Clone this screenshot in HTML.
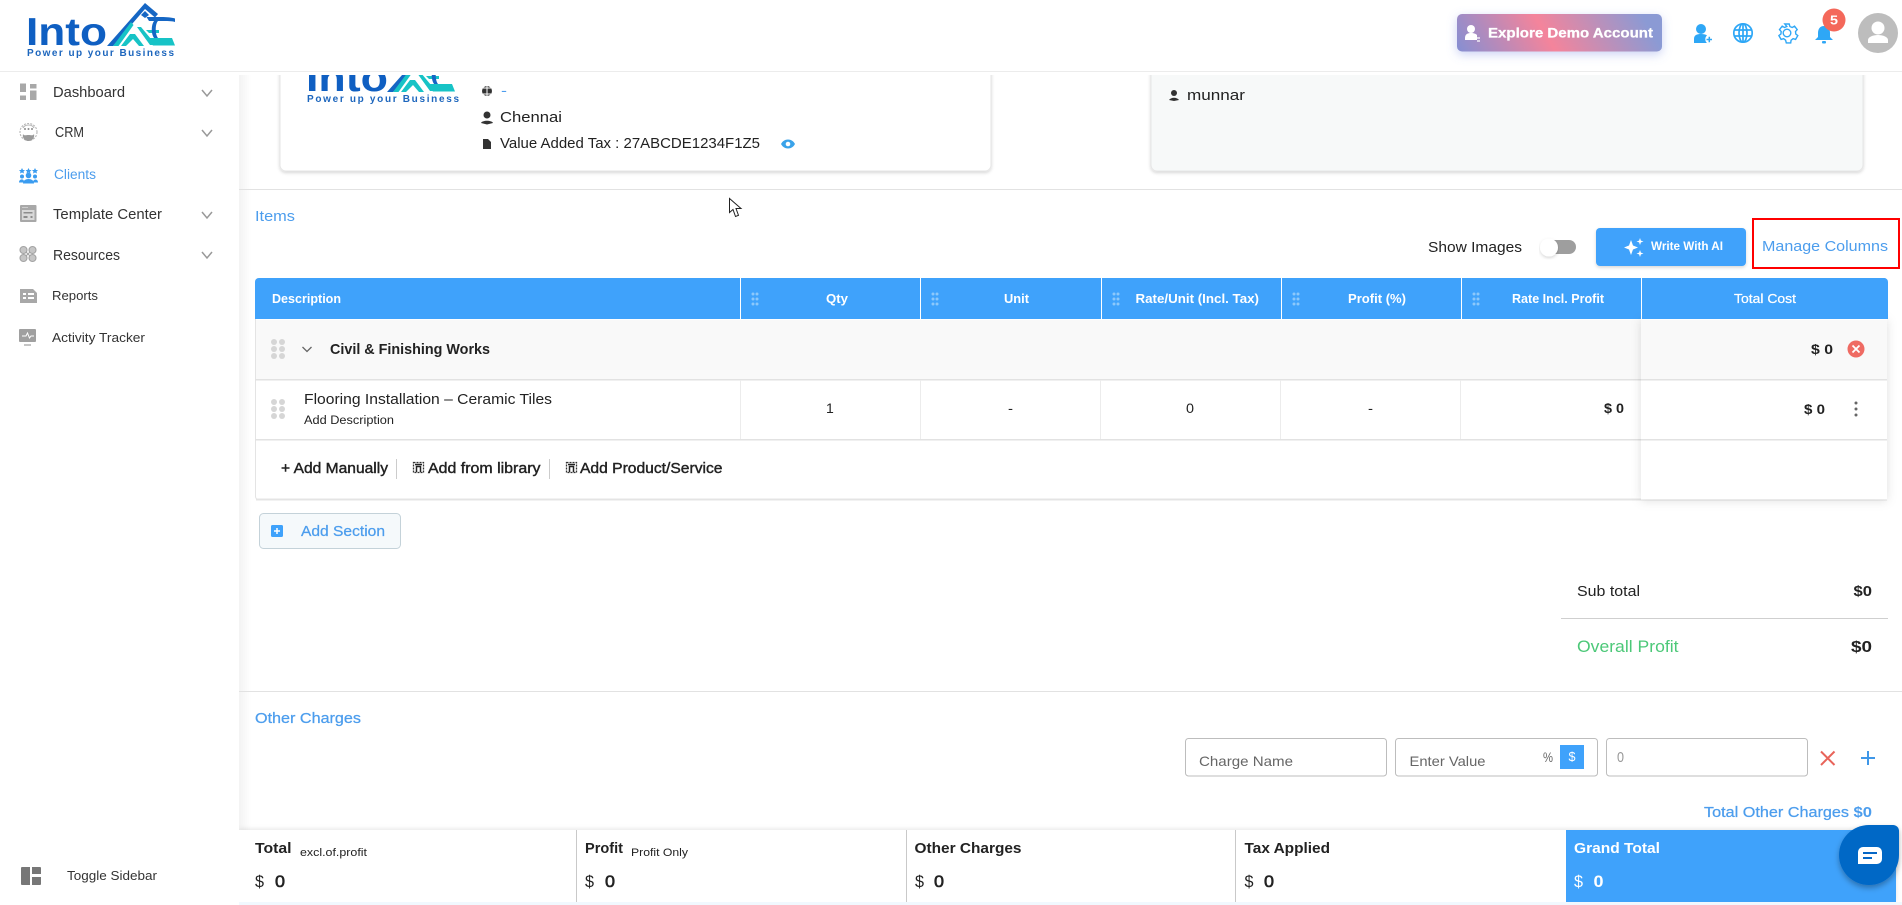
<!DOCTYPE html>
<html lang="en"><head><meta charset="utf-8"><title>Estimate Items</title>
<style>
html,body{margin:0;padding:0;background:#fff;width:1902px;height:905px;overflow:hidden}
svg{display:block;position:absolute;left:0;top:0}
text{font-family:"Liberation Sans",Arial,sans-serif;fill:#222;white-space:pre}
.b{font-weight:700}
.m{stroke:#222;stroke-width:.4px}
.bl{fill:#4c9ded}
.blm{fill:#4c9ded;stroke:#4c9ded;stroke-width:.25px}
.w{fill:#fff}
.wb{fill:#fff;font-weight:700}
.sb{fill:#333}
</style></head><body>
<svg width="1902" height="905" viewBox="0 0 1902 905" xmlns="http://www.w3.org/2000/svg">
<defs>
<filter id="sh" x="-5%" y="-10%" width="110%" height="125%"><feDropShadow dx="0" dy="1.5" stdDeviation="1.500" flood-color="#000" flood-opacity=".16"/></filter>
<filter id="sh2" x="-15%" y="-5%" width="125%" height="112%"><feDropShadow dx="0" dy="1" stdDeviation="5" flood-color="#000" flood-opacity=".13"/></filter>
<filter id="sh3" x="-20%" y="-50%" width="140%" height="220%"><feDropShadow dx="0" dy="3" stdDeviation="5" flood-color="#6b7fe0" flood-opacity=".35"/></filter>
<filter id="sh4" x="-30%" y="-30%" width="160%" height="170%"><feDropShadow dx="0" dy="3" stdDeviation="3" flood-color="#000" flood-opacity=".3"/></filter>
<filter id="sh5" x="-5%" y="-30%" width="110%" height="160%"><feDropShadow dx="0" dy="-1" stdDeviation="2.500" flood-color="#000" flood-opacity=".1"/></filter>
<linearGradient id="lg" x1="0" x2="1"><stop offset="0" stop-color="#f3f3f3"/><stop offset="1" stop-color="#fff"/></linearGradient>
<linearGradient id="demo" gradientUnits="userSpaceOnUse" x1="1465" y1="80" x2="1625" y2="-14"><stop offset="0" stop-color="#7b90d8"/><stop offset=".5" stop-color="#f4849b"/><stop offset="1" stop-color="#8b9ad4"/></linearGradient>
<g id="hd"><g fill="#8cc8fb"><circle cx="-2" cy="-5" r="1.500"/><circle cx="2" cy="-5" r="1.500"/><circle cx="-2" cy="0" r="1.500"/><circle cx="2" cy="0" r="1.500"/><circle cx="-2" cy="5" r="1.500"/><circle cx="2" cy="5" r="1.500"/></g></g>
<g id="rd"><g fill="#d6d6d6"><circle cx="-4" cy="-7" r="3"/><circle cx="4" cy="-7" r="3"/><circle cx="-4" cy="0" r="3"/><circle cx="4" cy="0" r="3"/><circle cx="-4" cy="7" r="3"/><circle cx="4" cy="7" r="3"/></g></g>
<g id="lib"><rect x=".5" y=".5" width="10" height="10" fill="none" stroke="#333" stroke-width="1.300" stroke-dasharray="2 1"/><path d="M3.500 10V4.500h4V10M2 2.500h7" fill="none" stroke="#222" stroke-width="1.500"/></g>
<g id="mark">
<path d="M107 46L145 3l13 11-3 3.500-10-8.500L113 46z" fill="#1566c4"/>
<path d="M141 15l4-4 4 4-4 3z" fill="#1566c4"/>
<path d="M113 46L131 22l2.500 3L118.500 46z" fill="#17c3c6"/>
<path d="M121 46l9-12 5 0 9 12h-5l-6-7-7 7z" fill="#17c3c6"/>
<path d="M137 27h4l15 18h-6z" fill="#17c3c6"/>
<path d="M145 38h27l3 7.500h-22z" fill="#17c3c6"/>
<path d="M146 30h13v3h-10z" fill="#17c3c6"/>
<path d="M149 21h12c6 0 11 0 14 1v-3.500c-3-1-8-1.500-14-1.500h-14.500z" fill="#1566c4"/>
<path d="M158 21c-3 3-3 13 0 17h-4c-3-4-3-13 0-17z" fill="#1566c4"/>
</g>
</defs>

<!-- content background -->
<rect x="239" y="0" width="12" height="905" fill="url(#lg)"/>

<!-- top cards -->
<rect x="280" y="40" width="711" height="131" rx="6" fill="#fff" stroke="#e6e6e6" filter="url(#sh)"/>
<rect x="1151" y="40" width="712" height="131" rx="6" fill="#f7f9f9" stroke="#e6e6e6" filter="url(#sh)"/>
<text x="306" y="91" class="b" font-size="39" style="fill:#0f5fc2" textLength="82" lengthAdjust="spacingAndGlyphs">Into</text>
<use href="#mark" transform="translate(280 46)"/>
<text x="307" y="102" class="b" font-size="10" style="fill:#1d66bd" textLength="152">Power up your Business</text>
<g fill="#333">
<circle cx="487" cy="91" r="5"/><path d="M483 88h8M483 94h8M487 86v10" stroke="#fff" stroke-width="1" fill="none"/>
<circle cx="487" cy="115" r="3.500"/><path d="M481 123c1-3 11-3 12 0l-6 1.500z"/>
<path d="M483 139h5l3 3v7h-8z"/>
</g>
<text x="501" y="95" class="bl" font-size="14" textLength="6" lengthAdjust="spacingAndGlyphs">-</text>
<text x="500" y="122" font-size="15" textLength="62" lengthAdjust="spacingAndGlyphs">Chennai</text>
<text x="500" y="148" font-size="15" textLength="260" lengthAdjust="spacingAndGlyphs">Value Added Tax : 27ABCDE1234F1Z5</text>
<path d="M781 144c3-6 11-6 14 0-3 6-11 6-14 0z" fill="#3aa3ea"/><circle cx="788" cy="144" r="2.300" fill="#fff"/>
<circle cx="1174" cy="93" r="3" fill="#333"/><path d="M1169 100c2-3 8-3 10 0l-5 1z" fill="#333"/>
<text x="1187" y="100" font-size="15" textLength="58" lengthAdjust="spacingAndGlyphs">munnar</text>

<!-- section divider -->
<rect x="239" y="189" width="1663" height="1" fill="#e2e2e2"/>
<text x="255" y="221" class="bl" font-size="15" textLength="40" lengthAdjust="spacingAndGlyphs">Items</text>

<!-- cursor -->
<path d="M729.500 198.500v14l3.500-3 2.500 7 3-1.200-2.500-6.800h5z" fill="#fff" stroke="#222" stroke-width="1"/>

<!-- toolbar -->
<text x="1428" y="252" font-size="15" textLength="94" lengthAdjust="spacingAndGlyphs">Show Images</text>
<rect x="1548" y="240" width="28" height="14" rx="7" fill="#9e9e9e"/>
<circle cx="1549" cy="247.500" r="9" fill="#fff" filter="url(#sh)"/>
<rect x="1596" y="228" width="150" height="38" rx="4" fill="#3fa2fb" filter="url(#sh)"/>
<path d="M1631 240l2 5.500 5 2-5 2-2 5.500-2-5.500-5-2 5-2zM1640 238l.9 2.600 2.600.9-2.600.9-.9 2.600-.9-2.600-2.600-.9 2.600-.9zM1640 250l.9 2.600 2.600.9-2.600.9-.9 2.600-.9-2.600-2.600-.9 2.600-.9z" fill="#fff"/>
<text x="1651" y="250" class="wb" font-size="11.500" textLength="72" lengthAdjust="spacingAndGlyphs">Write With AI</text>
<rect x="1753" y="219" width="146" height="49" fill="none" stroke="#f00" stroke-width="2"/>
<text x="1762" y="251" class="bl" font-size="15" textLength="126" lengthAdjust="spacingAndGlyphs">Manage Columns</text>

<!-- table -->
<rect x="255.500" y="278.500" width="1631" height="221" rx="3" fill="#fff" stroke="#e4e4e4"/>
<rect x="256" y="498.500" width="1631" height="2" fill="#e4e4e4"/>
<path d="M255 319v-37a4 4 0 0 1 4-4h1625a4 4 0 0 1 4 4v37z" fill="#3fa2fb"/>
<rect x="256" y="320" width="1630" height="59" fill="#f9f9f9"/>
<rect x="255" y="379" width="1632" height="1.500" fill="#e2e2e2"/>
<rect x="255" y="439" width="1632" height="1.500" fill="#e2e2e2"/>
<g fill="#fff"><rect x="740" y="278" width="1" height="41"/><rect x="920" y="278" width="1" height="41"/><rect x="1101" y="278" width="1" height="41"/><rect x="1281" y="278" width="1" height="41"/><rect x="1461" y="278" width="1" height="41"/><rect x="1641" y="278" width="1" height="41"/></g>
<g fill="#ececec"><rect x="740" y="380" width="1" height="59"/><rect x="920" y="380" width="1" height="59"/><rect x="1100" y="380" width="1" height="59"/><rect x="1280" y="380" width="1" height="59"/><rect x="1460" y="380" width="1" height="59"/></g>

<!-- sticky total column -->
<g filter="url(#sh2)"><rect x="1641" y="319" width="246" height="180.500" fill="#fff"/></g>
<path d="M1642 319v-41h242a3 3 0 0 1 3 3v38z" fill="#3fa2fb"/>
<rect x="1641" y="320" width="246" height="59" fill="#f9f9f9"/>
<rect x="1641" y="379" width="246" height="1.500" fill="#e2e2e2"/>
<rect x="1641" y="439" width="246" height="1.500" fill="#e2e2e2"/>

<use href="#hd" x="755" y="299"/><use href="#hd" x="935" y="299"/><use href="#hd" x="1116" y="299"/><use href="#hd" x="1296" y="299"/><use href="#hd" x="1476" y="299"/>
<text x="272" y="303" class="wb" font-size="13" textLength="69" lengthAdjust="spacingAndGlyphs">Description</text>
<text x="826" y="303" class="wb" font-size="13" textLength="22" lengthAdjust="spacingAndGlyphs">Qty</text>
<text x="1004" y="303" class="wb" font-size="13" textLength="25" lengthAdjust="spacingAndGlyphs">Unit</text>
<text x="1135.500" y="303" class="wb" font-size="13" textLength="123.500" lengthAdjust="spacingAndGlyphs">Rate/Unit (Incl. Tax)</text>
<text x="1348" y="303" class="wb" font-size="13" textLength="58" lengthAdjust="spacingAndGlyphs">Profit (%)</text>
<text x="1512" y="303" class="wb" font-size="13" textLength="92" lengthAdjust="spacingAndGlyphs">Rate Incl. Profit</text>
<text x="1734" y="303" class="w" font-size="13" textLength="62" lengthAdjust="spacingAndGlyphs" style="stroke:#fff;stroke-width:.25px">Total Cost</text>

<use href="#rd" x="278" y="349"/>
<path d="M302.500 347l4.500 4.500 4.500-4.500" fill="none" stroke="#666" stroke-width="1.300"/>
<text x="330" y="354" class="b" font-size="15" textLength="160" lengthAdjust="spacingAndGlyphs">Civil &amp; Finishing Works</text>
<text x="1811" y="354" class="b" font-size="14" textLength="22" lengthAdjust="spacingAndGlyphs">$ 0</text>
<circle cx="1856" cy="349" r="8.500" fill="#ef6b63"/><path d="M1852.500 345.500l7 7m0-7l-7 7" stroke="#fff" stroke-width="1.800"/>

<use href="#rd" x="278" y="409"/>
<text x="304" y="404" font-size="14.500" textLength="248" lengthAdjust="spacingAndGlyphs">Flooring Installation – Ceramic Tiles</text>
<text x="304" y="424" font-size="11.500" textLength="90" lengthAdjust="spacingAndGlyphs">Add Description</text>
<text x="826" y="413" font-size="14">1</text>
<text x="1008" y="413" font-size="14" textLength="5" lengthAdjust="spacingAndGlyphs">-</text>
<text x="1186" y="413" font-size="14" textLength="8" lengthAdjust="spacingAndGlyphs">0</text>
<text x="1368" y="413" font-size="14" textLength="5" lengthAdjust="spacingAndGlyphs">-</text>
<text x="1604" y="413" class="b" font-size="14" textLength="20" lengthAdjust="spacingAndGlyphs">$ 0</text>
<text x="1804" y="414" class="b" font-size="14" textLength="21" lengthAdjust="spacingAndGlyphs">$ 0</text>
<g fill="#666"><circle cx="1856" cy="403" r="1.500"/><circle cx="1856" cy="409" r="1.500"/><circle cx="1856" cy="415" r="1.500"/></g>

<text x="281" y="473" class="m" font-size="14.500" textLength="107" lengthAdjust="spacingAndGlyphs">+ Add Manually</text>
<rect x="396" y="459" width="1" height="20" fill="#ccc"/>
<use href="#lib" x="413" y="462"/>
<text x="428" y="473" class="m" font-size="14.500" textLength="112.500" lengthAdjust="spacingAndGlyphs">Add from library</text>
<rect x="549" y="459" width="1" height="20" fill="#ccc"/>
<use href="#lib" x="566" y="462"/>
<text x="580" y="473" class="m" font-size="14.500" textLength="142.500" lengthAdjust="spacingAndGlyphs">Add Product/Service</text>

<rect x="259.500" y="513.500" width="141" height="35" rx="4" fill="#f5f9fb" stroke="#c4d2d9"/>
<rect x="271" y="525" width="12" height="12" rx="1.500" fill="#3fa2fb"/><path d="M277 528v6m-3-3h6" stroke="#fff" stroke-width="1.500"/>
<text x="301" y="536" class="blm" font-size="14.500" textLength="84" lengthAdjust="spacingAndGlyphs">Add Section</text>

<!-- totals -->
<text x="1577" y="596" font-size="14.500" textLength="63" lengthAdjust="spacingAndGlyphs">Sub total</text>
<text x="1853.500" y="596" class="b" font-size="14.500" textLength="18.500" lengthAdjust="spacingAndGlyphs">$0</text>
<rect x="1561" y="618" width="327" height="1" fill="#cfcfcf"/>
<text x="1577" y="652" font-size="16.500" style="fill:#4cc878" textLength="101.500" lengthAdjust="spacingAndGlyphs">Overall Profit</text>
<text x="1851" y="652" class="b" font-size="16" textLength="21" lengthAdjust="spacingAndGlyphs">$0</text>
<rect x="239" y="691" width="1663" height="1" fill="#e2e2e2"/>

<!-- other charges -->
<text x="255" y="723" class="blm" font-size="14.500" textLength="106" lengthAdjust="spacingAndGlyphs">Other Charges</text>
<rect x="1185.500" y="738.500" width="201" height="37.500" rx="3" fill="#fff" stroke="#bdbdbd"/>
<text x="1199" y="766" font-size="14" style="fill:#666" textLength="94" lengthAdjust="spacingAndGlyphs">Charge Name</text>
<rect x="1395.500" y="738.500" width="202" height="37.500" rx="3" fill="#fff" stroke="#bdbdbd"/>
<text x="1409.500" y="766" font-size="14" style="fill:#666" textLength="76" lengthAdjust="spacingAndGlyphs">Enter Value</text>
<text x="1543" y="762" font-size="14" style="fill:#666" textLength="10" lengthAdjust="spacingAndGlyphs">%</text>
<rect x="1560" y="745" width="24" height="24" fill="#3fa2fb"/>
<text x="1568.500" y="761" class="w" font-size="12.500" textLength="7" lengthAdjust="spacingAndGlyphs">$</text>
<rect x="1606.500" y="738.500" width="201" height="37.500" rx="3" fill="#fff" stroke="#bdbdbd"/>
<text x="1617" y="762" font-size="15" style="fill:#999" textLength="7" lengthAdjust="spacingAndGlyphs">0</text>
<path d="M1821 751.500l13.500 13.500m0-13.500l-13.500 13.500" stroke="#e8645a" stroke-width="2" fill="none"/>
<path d="M1868 751v14m-7-7h14" stroke="#3f97e8" stroke-width="2" fill="none"/>
<text x="1704" y="817" class="blm" font-size="14.500" textLength="145" lengthAdjust="spacingAndGlyphs">Total Other Charges</text>
<text x="1853.500" y="817" class="b" font-size="14.500" style="fill:#4c9ded" textLength="18.500" lengthAdjust="spacingAndGlyphs">$0</text>

<!-- bottom summary -->
<rect x="239" y="830" width="1657" height="72" fill="#fff" filter="url(#sh5)"/>
<rect x="239" y="902" width="1663" height="3" fill="#f1f8fe"/>
<rect x="576" y="830" width="1" height="72" fill="#c9c9c9"/>
<rect x="906" y="830" width="1" height="72" fill="#c9c9c9"/>
<rect x="1235" y="830" width="1" height="72" fill="#c9c9c9"/>
<rect x="1566" y="830" width="330" height="72" fill="#3fa2fb"/>
<text x="255" y="853" class="b" font-size="14.500" textLength="36.500" lengthAdjust="spacingAndGlyphs">Total</text>
<text x="300" y="856" font-size="11" textLength="67" lengthAdjust="spacingAndGlyphs">excl.of.profit</text>
<text x="255" y="887" font-size="17" textLength="9" lengthAdjust="spacingAndGlyphs">$</text>
<text x="275" y="887" class="m" font-size="17" textLength="10" lengthAdjust="spacingAndGlyphs" style="stroke-width:.6px">0</text>
<text x="585" y="853" class="b" font-size="14.500" textLength="38" lengthAdjust="spacingAndGlyphs">Profit</text>
<text x="631" y="856" font-size="11" textLength="57" lengthAdjust="spacingAndGlyphs">Profit Only</text>
<text x="585" y="887" font-size="17" textLength="9" lengthAdjust="spacingAndGlyphs">$</text>
<text x="605" y="887" class="m" font-size="17" textLength="10" lengthAdjust="spacingAndGlyphs" style="stroke-width:.6px">0</text>
<text x="914.500" y="853" class="b" font-size="14.500" textLength="107" lengthAdjust="spacingAndGlyphs">Other Charges</text>
<text x="915" y="887" font-size="17" textLength="9" lengthAdjust="spacingAndGlyphs">$</text>
<text x="934" y="887" class="m" font-size="17" textLength="10" lengthAdjust="spacingAndGlyphs" style="stroke-width:.6px">0</text>
<text x="1244.500" y="853" class="b" font-size="14.500" textLength="85.500" lengthAdjust="spacingAndGlyphs">Tax Applied</text>
<text x="1244.500" y="887" font-size="17" textLength="9" lengthAdjust="spacingAndGlyphs">$</text>
<text x="1264" y="887" class="m" font-size="17" textLength="10" lengthAdjust="spacingAndGlyphs" style="stroke-width:.6px">0</text>
<text x="1574" y="853" class="wb" font-size="14.500" textLength="86" lengthAdjust="spacingAndGlyphs">Grand Total</text>
<text x="1574" y="887" class="w" font-size="17" textLength="9" lengthAdjust="spacingAndGlyphs">$</text>
<text x="1593.500" y="887" class="wb" font-size="17" textLength="10" lengthAdjust="spacingAndGlyphs">0</text>

<!-- chat -->
<path d="M1869 825h24a6 6 0 0 1 6 6v24a30 30 0 0 1-60 0a30 30 0 0 1 30-30z" fill="#0667c6" filter="url(#sh4)"/>
<path d="M1863 847h14a5 5 0 0 1 5 5v7a5 5 0 0 1-5 5h-19v-12a5 5 0 0 1 5-5z" fill="#fff"/>
<path d="M1863 853h14M1863 858h9" stroke="#0667c6" stroke-width="2"/>

<!-- header -->
<rect x="0" y="0" width="1902" height="75" fill="#fff"/>
<rect x="0" y="71" width="1902" height="1" fill="#ececec"/>
<text x="26" y="45" class="b" font-size="39" style="fill:#0f5fc2" textLength="81" lengthAdjust="spacingAndGlyphs">Into</text>
<use href="#mark"/>
<text x="27" y="56" class="b" font-size="10" style="fill:#1d66bd" textLength="147">Power up your Business</text>

<rect x="1457" y="14" width="205" height="37.500" rx="5" fill="url(#demo)" filter="url(#sh3)"/>
<circle cx="1471" cy="29" r="4" fill="#fff"/><path d="M1465 40v-2c0-4 3-5 6-5 3 0 5 1 6 2v5z" fill="#fff"/><path d="M1475 38h5M1477 41h3" stroke="#fff" stroke-width="1.200"/>
<text x="1488" y="37.500" class="wb" font-size="13.500" textLength="165" lengthAdjust="spacingAndGlyphs" style="stroke:#fff;stroke-width:.25px">Explore Demo Account</text>

<circle cx="1701" cy="29" r="5" fill="#2ea7f6"/>
<path d="M1694 43v-4c0-4 3-5 7-5 3 0 5 .5 6 1.500a5 5 0 0 0 0 7.500z" fill="#2ea7f6"/>
<path d="M1706.500 39.500h5.500m-2.700-2.800v5.600" stroke="#2ea7f6" stroke-width="1.500"/>
<g fill="none" stroke="#2ea7f6" stroke-width="1.700"><circle cx="1743" cy="33" r="9.200"/><ellipse cx="1743" cy="33" rx="4" ry="9.200"/><path d="M1734 30h18M1734 36h18M1743 24v18"/></g>
<g fill="none" stroke="#2ea7f6" stroke-width="1.400"><circle cx="1787" cy="33" r="3.800"/><path d="M1784.800 24h4.400l.7 2.500 2.300 1 2.300-1.300 2.700 3.400-1.700 2 .3 2.400 2 1.600-2.200 3.800-2.500-.7-2 1.500-.4 2.700h-4.400l-.7-2.700-2-1.500-2.500.7-2.200-3.800 2-1.600.3-2.400-1.700-2 2.700-3.400 2.300 1.300 2.300-1z"/></g>
<path d="M1824 26c4 0 6 3 6 7v4l3 3h-18l3-3v-4c0-4 2-7 6-7z" fill="#2ea7f6"/><rect x="1822" y="41" width="4" height="2.500" rx="1" fill="#2ea7f6"/>
<circle cx="1834" cy="20" r="11.500" fill="#f4685a"/>
<text x="1830" y="24.500" class="wb" font-size="12.500" textLength="8" lengthAdjust="spacingAndGlyphs">5</text>
<circle cx="1878" cy="33" r="20" fill="#bdbdbd"/>
<circle cx="1878" cy="28" r="6.500" fill="#fff"/><path d="M1868 43v-3c0-3 5-5 10-5s10 2 10 5v3z" fill="#fff"/>

<!-- sidebar -->
<rect x="0" y="72" width="239" height="833" fill="#fff"/>
<g fill="#a8a8a8">
<rect x="20" y="83.500" width="6" height="8.500"/><rect x="30" y="84" width="6.500" height="4.500"/><rect x="20" y="95.500" width="6" height="4.500"/><rect x="30" y="90.500" width="6.500" height="9.500"/>
</g>
<g fill="none" stroke="#b5b5b5" stroke-width="1.100">
<circle cx="28.500" cy="132" r="8.500" stroke-dasharray="2 1.200"/><path d="M23 128c2-4 9-4 11 0"/>
</g>
<path d="M23 134c1 2 3 1 5.500 1s4.500 1 5.500-1c1 4-2 7-5.500 7s-6.500-3-5.500-7z" fill="#9a9a9a"/>
<g fill="#8a8a8a"><circle cx="25" cy="129" r="1"/><circle cx="28.500" cy="129" r="1"/><circle cx="32" cy="129" r="1"/></g>
<g fill="#3a9cf0">
<circle cx="28.500" cy="175.500" r="2.800"/><path d="M23 183.500c0-6 11-6 11 0z"/>
<circle cx="22" cy="176.500" r="2"/><circle cx="35" cy="176.500" r="2"/><path d="M19 182.500c0-4 5-4 5-1v1zM33 182.500c0-4 5-4 5 0z"/>
<path d="M22 168l1 2h2l-1.500 1.500.5 2-2-1-2 1 .5-2L19 170h2zM28.500 168l1 2h2l-1.500 1.500.5 2-2-1-2 1 .5-2-1.500-1.500h2zM35 168l1 2h2l-1.500 1.500.5 2-2-1-2 1 .5-2-1.500-1.500h2z"/>
</g>
<rect x="20" y="205" width="16.500" height="17" rx="1" fill="#a8a8a8"/><rect x="22" y="210" width="12.500" height="10" fill="#d9d9d9"/><rect x="23.500" y="212" width="9" height="1.500" fill="#8d8d8d"/><rect x="23.500" y="216" width="4" height="2" fill="#8d8d8d"/><rect x="30.500" y="216" width="2" height="2" fill="#8d8d8d"/><rect x="22" y="207" width="6" height="1" fill="#ccc"/>
<g fill="#c6c6c6" stroke="#a3a3a3" stroke-width="1.100"><circle cx="23.500" cy="250" r="3.500"/><circle cx="32.500" cy="250" r="3.500"/><circle cx="23.500" cy="258" r="3.500"/><circle cx="32.500" cy="258" r="3.500"/></g>
<path d="M26 252l4 4m0-4l-4 4" stroke="#a3a3a3" stroke-width="1.100" fill="none"/>
<path d="M20 289h13l4 4v10H20z" fill="#a8a8a8"/><g fill="#fff"><rect x="23" y="293" width="3" height="2"/><rect x="28" y="293" width="6" height="2"/><rect x="23" y="297" width="3" height="2"/><rect x="28" y="297" width="6" height="2"/></g>
<rect x="19" y="329" width="17" height="13" rx="1" fill="#a0a0a0"/><path d="M22 336h4l1.500-3 2 5 1.500-2h3" stroke="#fff" stroke-width="1" fill="none"/><rect x="24" y="344" width="7" height="2" fill="#c5c5c5"/>
<g fill="none" stroke="#999" stroke-width="1.500"><path d="M202 90l5 6 5-6M202 130l5 6 5-6M202 212l5 6 5-6M202 252l5 6 5-6"/></g>
<g font-size="14.500">
<text x="53" y="97" class="sb" textLength="72" lengthAdjust="spacingAndGlyphs">Dashboard</text>
<text x="55" y="137" class="sb" textLength="29" lengthAdjust="spacingAndGlyphs">CRM</text>
<text x="54" y="179" style="fill:#4c9ded" font-size="13.500" textLength="42" lengthAdjust="spacingAndGlyphs">Clients</text>
<text x="53" y="219" class="sb" textLength="109" lengthAdjust="spacingAndGlyphs">Template Center</text>
<text x="53" y="260" class="sb" textLength="67" lengthAdjust="spacingAndGlyphs">Resources</text>
<text x="52" y="300" class="sb" font-size="13" textLength="46" lengthAdjust="spacingAndGlyphs">Reports</text>
<text x="52" y="342" class="sb" font-size="13" textLength="93" lengthAdjust="spacingAndGlyphs">Activity Tracker</text>
<text x="67" y="880" class="sb" font-size="12.500" textLength="90" lengthAdjust="spacingAndGlyphs">Toggle Sidebar</text>
</g>
<path d="M22 867h8v18h-8a1 1 0 0 1-1-1v-16a1 1 0 0 1 1-1zM32 867h8a1 1 0 0 1 1 1v6h-9zM32 877h9v7a1 1 0 0 1-1 1h-8z" fill="#777"/>
</svg>
</body></html>
